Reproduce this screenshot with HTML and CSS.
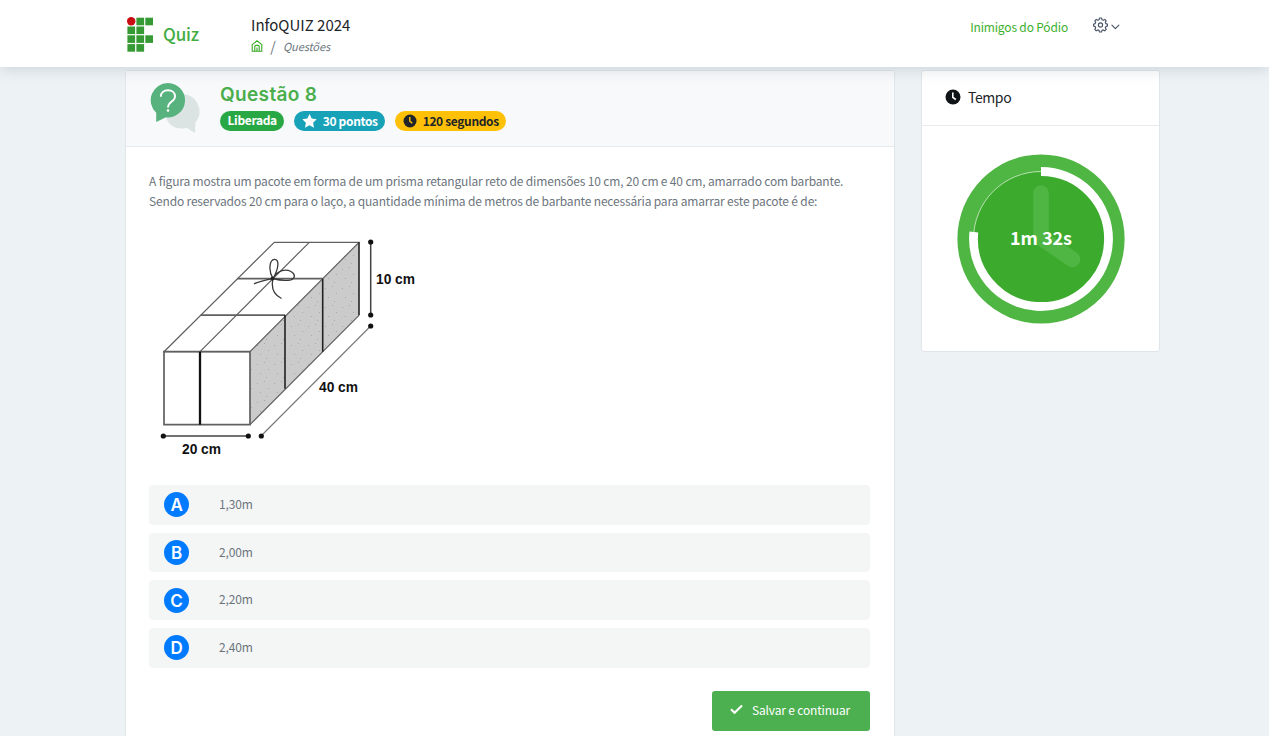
FILE: index.html
```html
<!DOCTYPE html>
<html lang="pt-BR">
<head>
<meta charset="utf-8">
<title>InfoQUIZ 2024</title>
<link rel="stylesheet" href="styles.css">
</head>
<body>
<header class="topbar">
  <div class="brand">
    <svg class="brand-logo" width="27" height="36" viewBox="0 0 27 36">
      <circle cx="4.2" cy="4.3" r="4.2" fill="#c90c14"/>
      <g fill="#359a34"><rect x="9.4" y="0.7" width="7.7" height="7.6"/><rect x="18.3" y="0.7" width="7.7" height="7.6"/><rect x="0.4" y="9.5" width="7.7" height="7.6"/><rect x="9.4" y="9.5" width="7.7" height="7.6"/><rect x="0.4" y="18.3" width="7.7" height="7.6"/><rect x="9.4" y="18.3" width="7.7" height="7.6"/><rect x="18.3" y="18.3" width="7.7" height="7.6"/><rect x="0.4" y="27.1" width="7.7" height="7.6"/><rect x="9.4" y="27.1" width="7.7" height="7.6"/></g>
    </svg>
    <span class="brand-name">Quiz</span>
  </div>
  <div class="heading">
    <div class="heading-title">InfoQUIZ 2024</div>
    <nav class="crumbs">
      <svg width="12" height="12" viewBox="0 0 12 12" fill="none" stroke="#37ab25" stroke-width="1.1" stroke-linejoin="round"><path d="M1.2 4.6 6 .8l4.8 3.8v6.6H1.2z"/><path d="M3.8 11V6.6Q3.8 5.4 5 5.4h2q1.2 0 1.2 1.2V11M6 7.5V11"/></svg>
      <span class="crumb-sep">/</span>
      <span class="crumb-page">Questões</span>
    </nav>
  </div>
  <div class="account">
    <span class="team">Inimigos do Pódio</span>
    <svg width="27" height="16" viewBox="0 0 27 16" fill="none" stroke="#4b5568" stroke-width="1.15" stroke-linejoin="round" stroke-linecap="round"><path d="M6.5 1h2l.5 1.800 1.200.5 1.600-.9 1.400 1.400-.9 1.600.5 1.200 1.600.5v2l-1.600.5-.5 1.200.9 1.600-1.400 1.400-1.600-.9-1.200.5-.5 1.600h-2L6 13.400l-1.200-.5-1.600.9-1.400-1.400.9-1.600-.5-1.200L.6 9.100v-2l1.600-.5.5-1.200-.9-1.600 1.400-1.400 1.600.9L6 2.800z"/><circle cx="7.500" cy="8" r="2.100"/><path d="M18.900 8.200l3.500 3.400 3.500-3.400"/></svg>
  </div>
</header>
<main class="layout">
  <section class="card question">
    <div class="question-head">
      <svg class="bubbles" width="52" height="54" viewBox="0 0 52 54">
        <path d="M32 12a17.500 17.500 0 0 1 13.500 28.500L45 51l-8.500-5.300C26 49 17 43 15 32z" fill="#dbe4e3"/>
        <path d="M18 1a17.200 17.200 0 1 1-2 34.300L6.200 40V30.800A17.200 17.200 0 0 1 18 1z" fill="#57b27d"/>
        <path d="M10.800 14.800c0-4 3-6.500 7.200-6.500s7 2.600 7 6.100c0 5.400-7 5-7 11.100" fill="none" stroke="#fff" stroke-width="1.900"/><circle cx="18" cy="28.500" r="1.300" fill="#fff"/>
      </svg>
      <div>
        <h1 class="question-title">Questão 8</h1>
        <div class="badges">
          <span class="badge badge-open">Liberada</span>
          <span class="badge badge-points"><svg width="15" height="14" viewBox="0 0 15 14"><path fill="#fff" d="M7.500 0l2.200 4.500 5 .7-3.600 3.500.9 5-4.500-2.400L3 13.700l.9-5L.3 5.200l5-.7z"/></svg>30 pontos</span>
          <span class="badge badge-time"><svg width="14" height="14" viewBox="0 0 14 14"><circle cx="7" cy="7" r="6.500" fill="#212529"/><path d="M6.800 3v4.200l2.500 1.900" fill="none" stroke="#ffc107" stroke-width="1.400"/></svg>120 segundos</span>
        </div>
      </div>
    </div>
    <div class="question-body">
      <p class="statement">A figura mostra um pacote em forma de um prisma retangular reto de dimensões 10 cm, 20 cm e 40 cm, amarrado com barbante.<br>Sendo reservados 20 cm para o laço, a quantidade mínima de metros de barbante necessária para amarrar este pacote é de:</p>
      <svg class="figure" width="280" height="236" viewBox="149 228 280 236">
        <defs><pattern id="grain" width="17" height="19" patternUnits="userSpaceOnUse"><g fill="#a9a9a9"><rect x="2" y="3" width="1" height="1"/><rect x="9" y="1" width="1" height="1"/><rect x="13" y="8" width="1" height="1"/><rect x="5" y="12" width="1" height="1"/><rect x="11" y="16" width="1" height="1"/></g></pattern></defs>
        <path d="M250 351.700 359 242.300v73L250 424.700z" fill="#cbcbcb"/>
        <path d="M250 351.700 359 242.300v73L250 424.700z" fill="url(#grain)"/>
        <g fill="none" stroke="#606060" stroke-width="1.200">
          <path d="M164 351.700 274.300 242.300H359L250 351.700z"/>
          <path d="M200 351.700 309.300 242.300M250 424.700 359 315.300"/>
          <path d="M237.300 278.700h85.400M200.700 315.200H285" stroke-width="1.700"/>
          <path d="M164 351.700v73h86v-73z" stroke-width="1.700"/>
        </g>
        <g fill="none" stroke="#222" stroke-width="1.600"><path d="M359 242.300v73M322.700 278.700v73M285 315v73.700"/><path d="M200 351.700v73" stroke="#111" stroke-width="2.300"/></g>
        <path d="M273 278.500c-5-8-3.500-19 1.500-19.200 5-.1 4.500 9-1.500 19.200 5-9 13-9.500 18-7 5 3 4 7 0 8.300-6 1.200-12 .4-18-1.300-5 1-12 2.300-19 5.300M273 278.500c-2 9 0 16 8.500 20" fill="none" stroke="#383838" stroke-width="1.300"/>
        <circle cx="272.500" cy="278.500" r="1.900" fill="#222"/>
        <path d="M163.300 436h85M370.700 242v73" stroke="#444" stroke-width="1.500"/><path d="M261 436 370.700 326" stroke="#777" stroke-width="1.100"/>
        <g fill="#111"><circle cx="163.300" cy="436" r="2.600"/><circle cx="248.300" cy="436" r="2.600"/><circle cx="261.300" cy="436" r="2.600"/><circle cx="370.700" cy="242" r="2.600"/><circle cx="370.700" cy="315" r="2.600"/><circle cx="370.700" cy="326" r="2.600"/></g>
        <g class="dimension"><text x="376" y="284" textLength="39" lengthAdjust="spacingAndGlyphs">10 cm</text><text x="319" y="392" textLength="39" lengthAdjust="spacingAndGlyphs">40 cm</text><text x="182" y="454" textLength="39" lengthAdjust="spacingAndGlyphs">20 cm</text></g>
      </svg>
      <div class="options">
        <div class="option"><span class="letter">A</span><span class="answer">1,30m</span></div>
        <div class="option"><span class="letter">B</span><span class="answer">2,00m</span></div>
        <div class="option"><span class="letter">C</span><span class="answer">2,20m</span></div>
        <div class="option"><span class="letter">D</span><span class="answer">2,40m</span></div>
      </div>
      <button class="save"><svg width="13" height="11" viewBox="0 0 13 11" fill="none" stroke="#fff" stroke-width="2.100"><path d="M1 5.200 4.600 8.800 12 1.500"/></svg><span>Salvar e continuar</span></button>
    </div>
  </section>
  <aside class="card timer">
    <div class="timer-head"><svg width="16" height="16" viewBox="0 0 16 16"><circle cx="8" cy="8" r="7.500" fill="#111416"/><path d="M7.800 3.500v4.800l3 2.200" fill="none" stroke="#fff" stroke-width="1.600"/></svg><span>Tempo</span></div>
    <svg class="dial" width="168" height="170" viewBox="0 0 168 170">
      <ellipse cx="84" cy="85" rx="83.600" ry="84.600" fill="#4fb543"/>
      <circle cx="84" cy="85" r="67.500" fill="#3cab2d" stroke="#d4edcf" stroke-width=".8"/>
      <path d="M84 39v45l31.500 21.500" fill="none" stroke="#4fb543" stroke-width="15.500" stroke-linecap="round" stroke-linejoin="round"/>
      <path d="M84 17.500A67.500 67.500 0 1 1 16.870 77.940" fill="none" stroke="#fff" stroke-width="8.800"/>
      <text class="dial-text" x="84" y="91" text-anchor="middle" textLength="62">1m 32s</text>
    </svg>
  </aside>
</main>
</body>
</html>
```
FILE: styles.css
```css
* { box-sizing: border-box; }
body { margin: 0; height: 736px; overflow: hidden; background: #edf2f5; color: #6c757d; font-family: "Noto Sans CJK SC", "Noto Sans", sans-serif; font-size: 12px; line-height: 20px; letter-spacing: -.165px; }
svg { display: block; flex: none; }
.topbar { position: relative; z-index: 1; display: flex; height: 67px; padding: 0 149px 0 127px; background: #fff; box-shadow: 0 1px 15px rgba(50, 70, 90, .2); }
.brand { display: flex; width: 124px; gap: 9px; padding-top: 17px; }
.brand-name { color: #43ad43; font-size: 17px; font-weight: 500; line-height: 33px; }
.heading { padding-top: 13px; }
.heading-title { color: #212529; font-size: 15px; line-height: 23px; letter-spacing: 0; }
.crumbs { display: flex; align-items: center; height: 20px; }
.crumb-sep { width: 20px; text-align: center; font-size: 14px; }
.crumb-page { font-size: 11px; font-style: italic; letter-spacing: -.1px; }
.account { display: flex; margin-left: auto; gap: 25px; padding-top: 17px; color: #3cb02c; line-height: 20px; }
.layout { display: flex; gap: 26px; padding: 3px 0 0 125px; align-items: flex-start; }
.card { border: 1px solid #e0e5e9; border-radius: 3px; background: #fff; }
.question { width: 770px; height: 690px; }
.question-head { display: flex; height: 76px; gap: 18px; padding: 11px 0 0 24px; border-bottom: 1px solid #e8ebee; background: #f8f9fb; }
.question-title { margin: 0; color: #49ae4b; font: 600 19px/25px Inter, sans-serif; letter-spacing: .35px; }
.badges { display: flex; gap: 10px; margin-top: 4px; }
.badge { display: flex; align-items: center; gap: 6px; height: 20px; padding: 0 7.500px; border-radius: 10px; color: #fff; font-size: 12px; font-weight: 700; line-height: 20px; letter-spacing: -.35px; white-space: nowrap; }
.badge-open { background: #28a745; line-height: 18px; align-items: flex-start; }
.badge-points { background: #17a2b8; }
.badge-time { background: #ffc107; color: #212529; }
.question-body { display: flex; flex-direction: column; padding: 24px 24px 0 23px; }
.statement { margin: 0; white-space: nowrap; }
.figure { margin-top: 17px; }
.dimension { font: 700 14px "Liberation Sans", sans-serif; letter-spacing: 0; fill: #111; }
.options { display: grid; gap: 8px; margin-top: 21px; }
.option { display: flex; align-items: center; gap: 30px; height: 39.700px; padding-left: 15px; border-radius: 4px; background: #f4f6f6; }
.letter { width: 25px; height: 25px; border-radius: 50%; background: #007bff; color: #fff; text-align: center; font: 600 17px/26px Inter, sans-serif; }
.answer { padding-bottom: 2px; }
.save { display: flex; align-items: center; align-self: flex-end; gap: 9px; width: 158px; height: 40px; margin-top: 23px; padding: 0 18px 2px; border: 0; border-radius: 3px; background: #4caf50; color: #fff; font: inherit; letter-spacing: inherit; white-space: nowrap; }
.timer { width: 239px; height: 282px; }
.timer-head { display: flex; align-items: center; gap: 7px; height: 55px; padding: 0 0 3px 23px; border-bottom: 1px solid #e8ebee; color: #212529; font-size: 14px; letter-spacing: -.4px; }
.dial { margin: 28px 0 0 35px; }
.dial-text { font: 700 18px "Noto Sans CJK SC", sans-serif; letter-spacing: 0; fill: #fff; }
```
